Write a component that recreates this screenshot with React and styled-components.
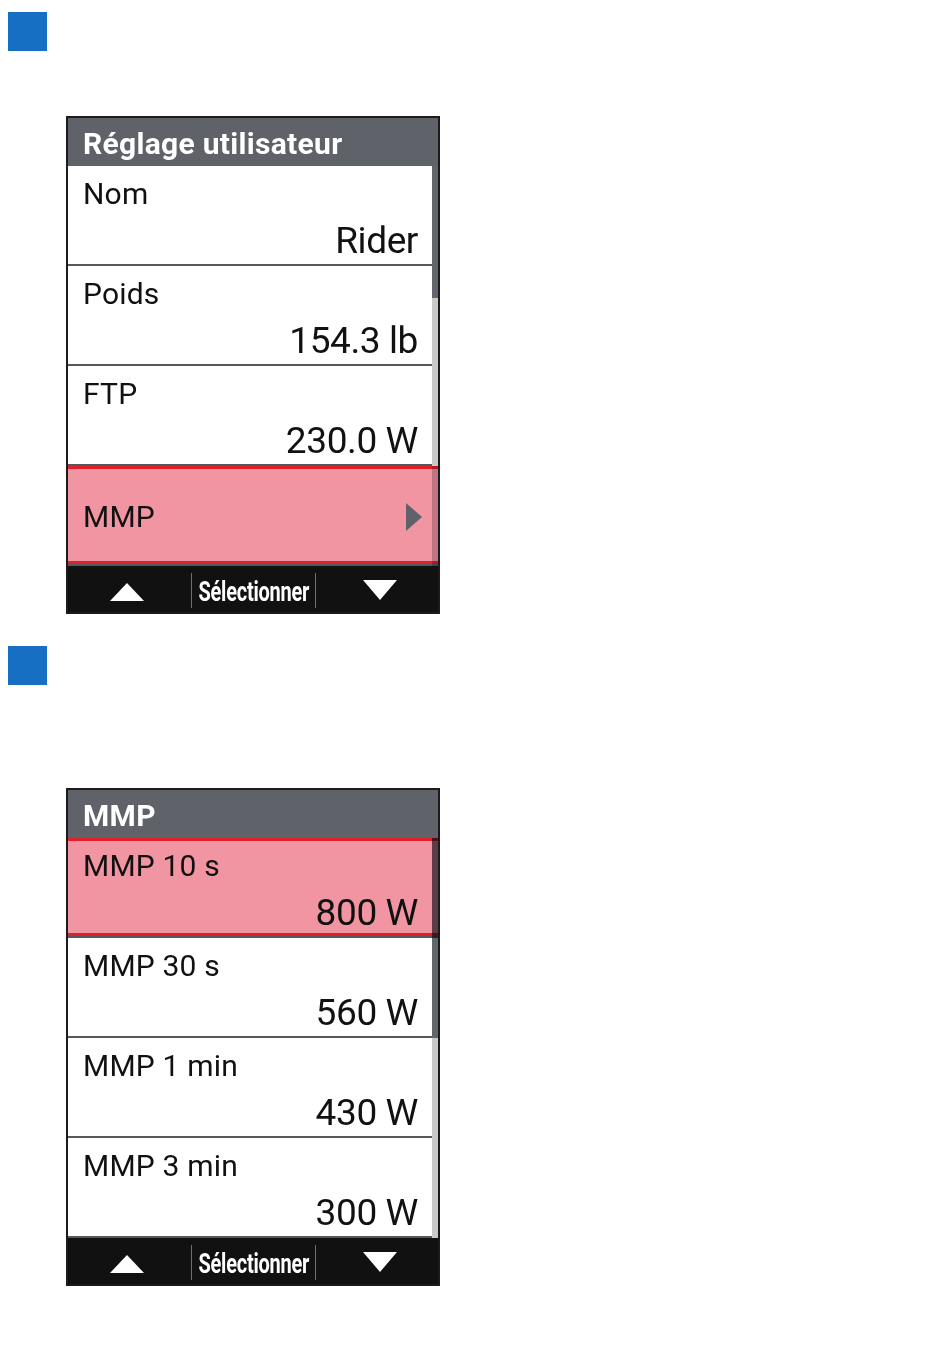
import React from 'react';
import styled, { createGlobalStyle } from 'styled-components';

const GlobalStyle = createGlobalStyle`
  body {
    margin: 0;
    background: #ffffff;
    font-family: Roboto, "Liberation Sans", Arial, sans-serif;
  }
`;

const Page = styled.main`
  padding: 12px 0 40px 8px;
`;

const Marker = styled.div`
  width: 39px;
  height: 39px;
  margin-top: ${(p) => p.$top || 0}px;
  background: #176fc3;
`;

const Device = styled.section`
  width: 370px;
  margin: ${(p) => p.$top}px 0 0 58px;
  border: 2px solid #1b1b1b;
  background: #ffffff;
`;

const Title = styled.h2`
  margin: 0;
  height: 48px;
  box-sizing: border-box;
  padding: 6px 0 0 15px;
  background: #5f6268;
  color: #ffffff;
  font-size: 30px;
  font-weight: 700;
  letter-spacing: 0.3px;
  line-height: 40px;
`;

const List = styled.div`
  position: relative;
  background: #ffffff;
`;

const ScrollTrack = styled.div`
  position: absolute;
  top: 0;
  right: 0;
  bottom: 0;
  width: 6px;
  background: #c9c9c9;
`;

const ScrollThumb = styled.div`
  width: 6px;
  background: #62666c;
`;

const Row = styled.div`
  display: flex;
  flex-direction: ${(p) => (p.$link ? 'row' : 'column')};
  align-items: ${(p) => (p.$link ? 'center' : 'stretch')};
  justify-content: ${(p) => (p.$link ? 'space-between' : 'flex-start')};
  height: 100px;
  box-sizing: border-box;
  padding: ${(p) => (p.$link ? '4px 16px 0 15px' : '13px 20px 0 15px')};
  border-bottom: 2px solid #55585c;
  color: #111111;
  ${(p) =>
    p.$active &&
    `
    position: relative;
    z-index: 1;
    background: #f295a3;
    mix-blend-mode: multiply;
    box-shadow: inset 0 3px #e1202b, inset 0 -3px #e1202b;
  `}
`;

const Label = styled.div`
  font-size: 30px;
  line-height: 30px;
  letter-spacing: 0.2px;
`;

const Value = styled.div`
  margin-top: 13px;
  font-size: 37px;
  line-height: 37px;
  letter-spacing: -0.4px;
  text-align: right;
`;

const Footer = styled.footer`
  display: grid;
  grid-template-columns: repeat(3, minmax(0, 1fr));
  align-items: center;
  height: 46px;
  background: #111111;
`;

const FooterCell = styled.div`
  display: flex;
  align-items: center;
  justify-content: center;
  height: 35px;
  margin-top: 2px;
  border-left: ${(p) => (p.$sep ? '1px solid #707070' : 'none')};
  color: #ffffff;
`;

const FooterText = styled.span`
  display: inline-block;
  flex-shrink: 0;
  margin-top: 4px;
  font-size: 27px;
  font-weight: 700;
  letter-spacing: -0.3px;
  transform: scaleX(0.74);
  white-space: nowrap;
`;

const Arrow = styled.svg`
  display: block;
  flex-shrink: 0;
  margin: ${(p) => p.$shift || 0}px 0 0 ${(p) => p.$nudge || 0}px;
`;

const UpIcon = () => (
  <Arrow width="34" height="18" viewBox="0 0 34 18" $shift={4} $nudge={-6}>
    <polygon points="17,0 34,18 0,18" fill="#ffffff" />
  </Arrow>
);

const DownIcon = () => (
  <Arrow width="34" height="20" viewBox="0 0 34 20" $shift={0} $nudge={6}>
    <polygon points="0,0 34,0 17,20" fill="#ffffff" />
  </Arrow>
);

const NextIcon = () => (
  <svg width="16" height="28" viewBox="0 0 16 28">
    <polygon points="0,0 16,14 0,28" fill="#5f6268" />
  </svg>
);

function Screen({ title, items, thumb, top }) {
  return (
    <Device $top={top}>
      <Title>{title}</Title>
      <List>
        <ScrollTrack>
          <ScrollThumb style={{ height: thumb }} />
        </ScrollTrack>
        {items.map((it) =>
          it.link ? (
            <Row key={it.label} $link $active={it.active}>
              <Label>{it.label}</Label>
              <NextIcon />
            </Row>
          ) : (
            <Row key={it.label} $active={it.active}>
              <Label>{it.label}</Label>
              <Value>{it.value}</Value>
            </Row>
          )
        )}
      </List>
      <Footer>
        <FooterCell>
          <UpIcon />
        </FooterCell>
        <FooterCell $sep>
          <FooterText>Sélectionner</FooterText>
        </FooterCell>
        <FooterCell $sep>
          <DownIcon />
        </FooterCell>
      </Footer>
    </Device>
  );
}

const userItems = [
  { label: 'Nom', value: 'Rider' },
  { label: 'Poids', value: '154.3 lb' },
  { label: 'FTP', value: '230.0 W' },
  { label: 'MMP', link: true, active: true },
];

const mmpItems = [
  { label: 'MMP 10 s', value: '800 W', active: true },
  { label: 'MMP 30 s', value: '560 W' },
  { label: 'MMP 1 min', value: '430 W' },
  { label: 'MMP 3 min', value: '300 W' },
];

export default function App() {
  return (
    <>
      <GlobalStyle />
      <Page>
        <Marker />
        <Screen title="Réglage utilisateur" items={userItems} thumb={132} top={65} />
        <Marker $top={32} />
        <Screen title="MMP" items={mmpItems} thumb={200} top={103} />
      </Page>
    </>
  );
}
